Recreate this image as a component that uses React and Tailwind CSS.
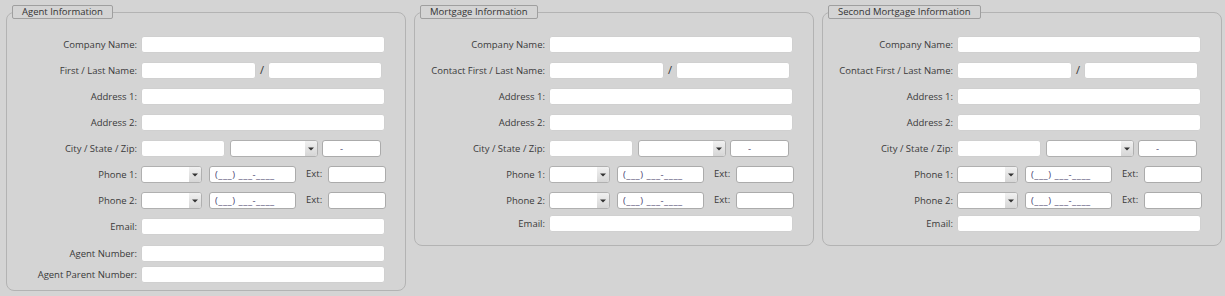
import React from "react";

const font = { fontFamily: '"Open Sans", "Noto Sans", sans-serif' };

const TextBox = ({ className = "", value = "", strong = false }) => (
  <input
    type="text"
    readOnly
    value={value}
    className={`h-[17px] bg-white rounded-[3px] border outline-none px-[5px] text-[9.5px] text-[#4a4470] ${
      strong ? "border-[#ababab]" : "border-[#d0d0d0]"
    } ${className}`}
  />
);

const Select = ({ className = "" }) => (
  <div
    className={`h-[17px] flex bg-white rounded-[3px] border border-[#b0b0b0] overflow-hidden ${className}`}
  >
    <div className="flex-1" />
    <div className="w-[12px] flex items-center justify-center bg-gradient-to-b from-[#f1f1f1] to-[#d6d6d6]">
      <svg width="6" height="4" viewBox="0 0 6 4">
        <path d="M0 0.5 L6 0.5 L3 3.5 Z" fill="#333" />
      </svg>
    </div>
  </div>
);

const Row = ({ label, className = "", children }) => (
  <div className={`flex items-center h-[17px] ${className}`}>
    <label className="w-[130px] shrink-0 text-right text-[9.5px] text-[#3a3a3a] leading-none">
      {label}
    </label>
    <div className="ml-[4px] flex items-center">{children}</div>
  </div>
);

const NameRow = ({ label }) => (
  <Row label={label}>
    <TextBox className="w-[115px]" />
    <span className="w-[12px] text-center text-[11px] text-[#333]">/</span>
    <TextBox className="w-[114px]" />
  </Row>
);

const CityRow = () => (
  <Row label="City / State / Zip:">
    <TextBox className="w-[84px]" />
    <Select className="ml-[5px] w-[88px]" />
    <TextBox className="ml-[4px] w-[59px] pl-[17px]" value="-" strong />
  </Row>
);

const PhoneRow = ({ label }) => (
  <Row label={label}>
    <Select className="w-[61px]" />
    <TextBox
      className="ml-[7px] w-[87px] tracking-[0.5px]"
      value="(___) ___-____"
      strong
    />
    <span className="w-[32px] pl-[10px] text-[9.5px] text-[#3a3a3a]">Ext:</span>
    <TextBox className="w-[58px]" strong />
  </Row>
);

const Panel = ({ title, className = "", children }) => (
  <fieldset
    className={`w-[400px] shrink-0 border border-[#b3b3b3] rounded-[8px] ${className}`}
  >
    <legend className="ml-[5px] h-[14px] px-[9px] border border-[#9f9f9f] rounded-[2px] text-[9.5px] leading-[12px] text-[#333]">
      {title}
    </legend>
    <div className="flex flex-col gap-[9px] mt-[17px]">{children}</div>
  </fieldset>
);

export default function App() {
  return (
    <div
      style={font}
      className="w-[1225px] h-[296px] bg-[#d4d4d4] flex items-start gap-[8px] pl-[6px] pt-[5px]"
    >
      <Panel title="Agent Information" className="pb-[7px]">
        <Row label="Company Name:">
          <TextBox className="w-[244px]" />
        </Row>
        <NameRow label="First / Last Name:" />
        <Row label="Address 1:">
          <TextBox className="w-[244px]" />
        </Row>
        <Row label="Address 2:">
          <TextBox className="w-[244px]" />
        </Row>
        <CityRow />
        <PhoneRow label="Phone 1:" />
        <PhoneRow label="Phone 2:" />
        <Row label="Email:">
          <TextBox className="w-[244px]" />
        </Row>
        <Row label="Agent Number:" className="mt-[1px]">
          <TextBox className="w-[244px]" />
        </Row>
        <Row label="Agent Parent Number:" className="-mt-[5px]">
          <TextBox className="w-[244px]" />
        </Row>
      </Panel>

      <Panel title="Mortgage Information" className="pb-[13px]">
        <Row label="Company Name:">
          <TextBox className="w-[244px]" />
        </Row>
        <NameRow label="Contact First / Last Name:" />
        <Row label="Address 1:">
          <TextBox className="w-[244px]" />
        </Row>
        <Row label="Address 2:">
          <TextBox className="w-[244px]" />
        </Row>
        <CityRow />
        <PhoneRow label="Phone 1:" />
        <PhoneRow label="Phone 2:" />
        <Row label="Email:" className="-mt-[3px]">
          <TextBox className="w-[244px]" />
        </Row>
      </Panel>

      <Panel title="Second Mortgage Information" className="pb-[13px]">
        <Row label="Company Name:">
          <TextBox className="w-[244px]" />
        </Row>
        <NameRow label="Contact First / Last Name:" />
        <Row label="Address 1:">
          <TextBox className="w-[244px]" />
        </Row>
        <Row label="Address 2:">
          <TextBox className="w-[244px]" />
        </Row>
        <CityRow />
        <PhoneRow label="Phone 1:" />
        <PhoneRow label="Phone 2:" />
        <Row label="Email:" className="-mt-[3px]">
          <TextBox className="w-[244px]" />
        </Row>
      </Panel>
    </div>
  );
}
